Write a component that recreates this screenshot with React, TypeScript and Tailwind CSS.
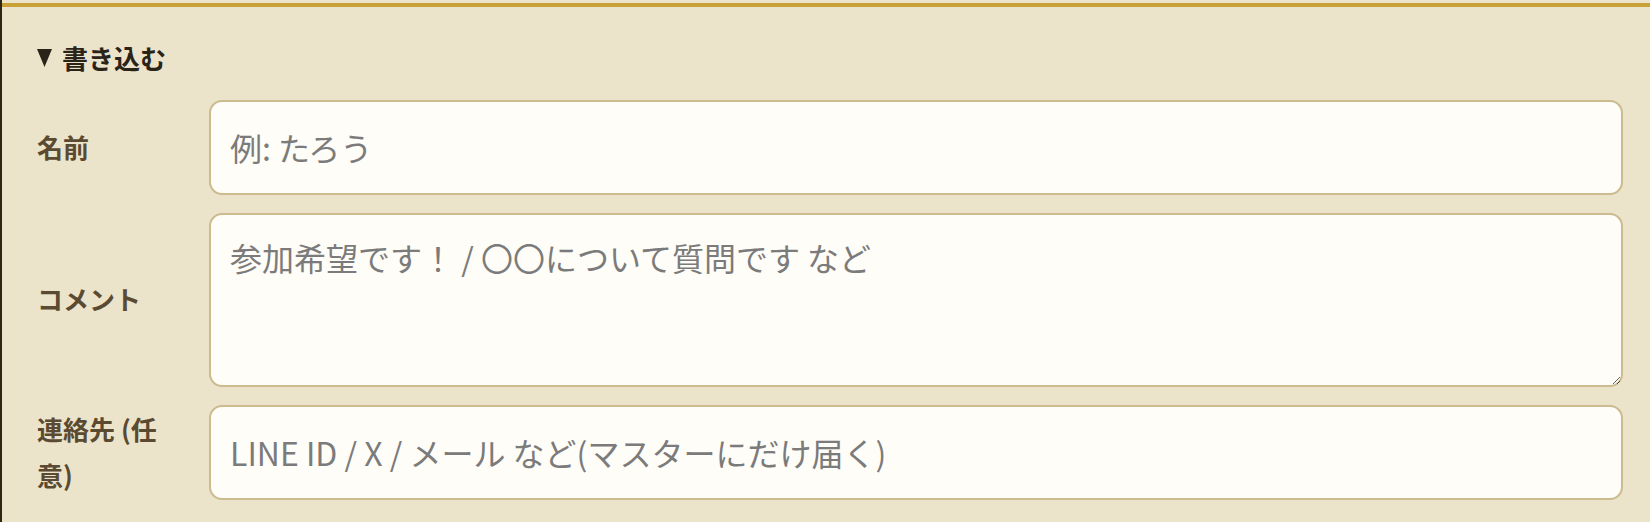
import { useState } from 'react';

const fieldBase =
  'w-full rounded-[13px] border-2 border-[#cbbb8e] bg-[#fffdf7] px-[19px] text-[32px] text-[#333] placeholder:text-[#7b7b7b] outline-none';

const labelBase = 'text-[26px] font-bold leading-[1.8] text-[#5a4a31]';

export default function App() {
  const [name, setName] = useState('');
  const [comment, setComment] = useState('');
  const [contact, setContact] = useState('');

  return (
    <div
      className="min-h-[522px] w-full border-l-2 border-[#2e2612] bg-[#ece3cb] pt-[3px]"
      style={{ fontFamily: '"Noto Sans CJK JP", "Noto Sans", sans-serif' }}
    >
      <section className="border-t-4 border-[#c9a137] pl-[35px] pr-[27px] pb-6">
        <h2 className="mt-[28px] flex items-center gap-[10px] text-[26px] font-bold leading-[1.8] text-[#2a2418]">
          <svg width="15" height="18" viewBox="0 0 15 18" aria-hidden="true">
            <polygon points="0,0 15,0 7.5,18" fill="#2a2418" />
          </svg>
          書き込む
        </h2>

        <form className="mt-[18px] grid grid-cols-[140px_1fr] items-center gap-x-[32px] gap-y-[18px]">
          <label htmlFor="bbs-name" className={labelBase}>
            名前
          </label>
          <input
            id="bbs-name"
            value={name}
            onChange={(e) => setName(e.target.value)}
            placeholder="例: たろう"
            className={`${fieldBase} h-[95px]`}
          />

          <label htmlFor="bbs-comment" className={labelBase}>
            コメント
          </label>
          <textarea
            id="bbs-comment"
            value={comment}
            onChange={(e) => setComment(e.target.value)}
            placeholder="参加希望です！ / 〇〇について質問です など"
            className={`${fieldBase} block h-[174px] pt-[14px] leading-[1.8]`}
          />

          <label htmlFor="bbs-contact" className={labelBase}>
            連絡先 (任意)
          </label>
          <input
            id="bbs-contact"
            value={contact}
            onChange={(e) => setContact(e.target.value)}
            placeholder="LINE ID / X / メール など(マスターにだけ届く)"
            className={`${fieldBase} h-[95px]`}
          />
        </form>
      </section>
    </div>
  );
}
